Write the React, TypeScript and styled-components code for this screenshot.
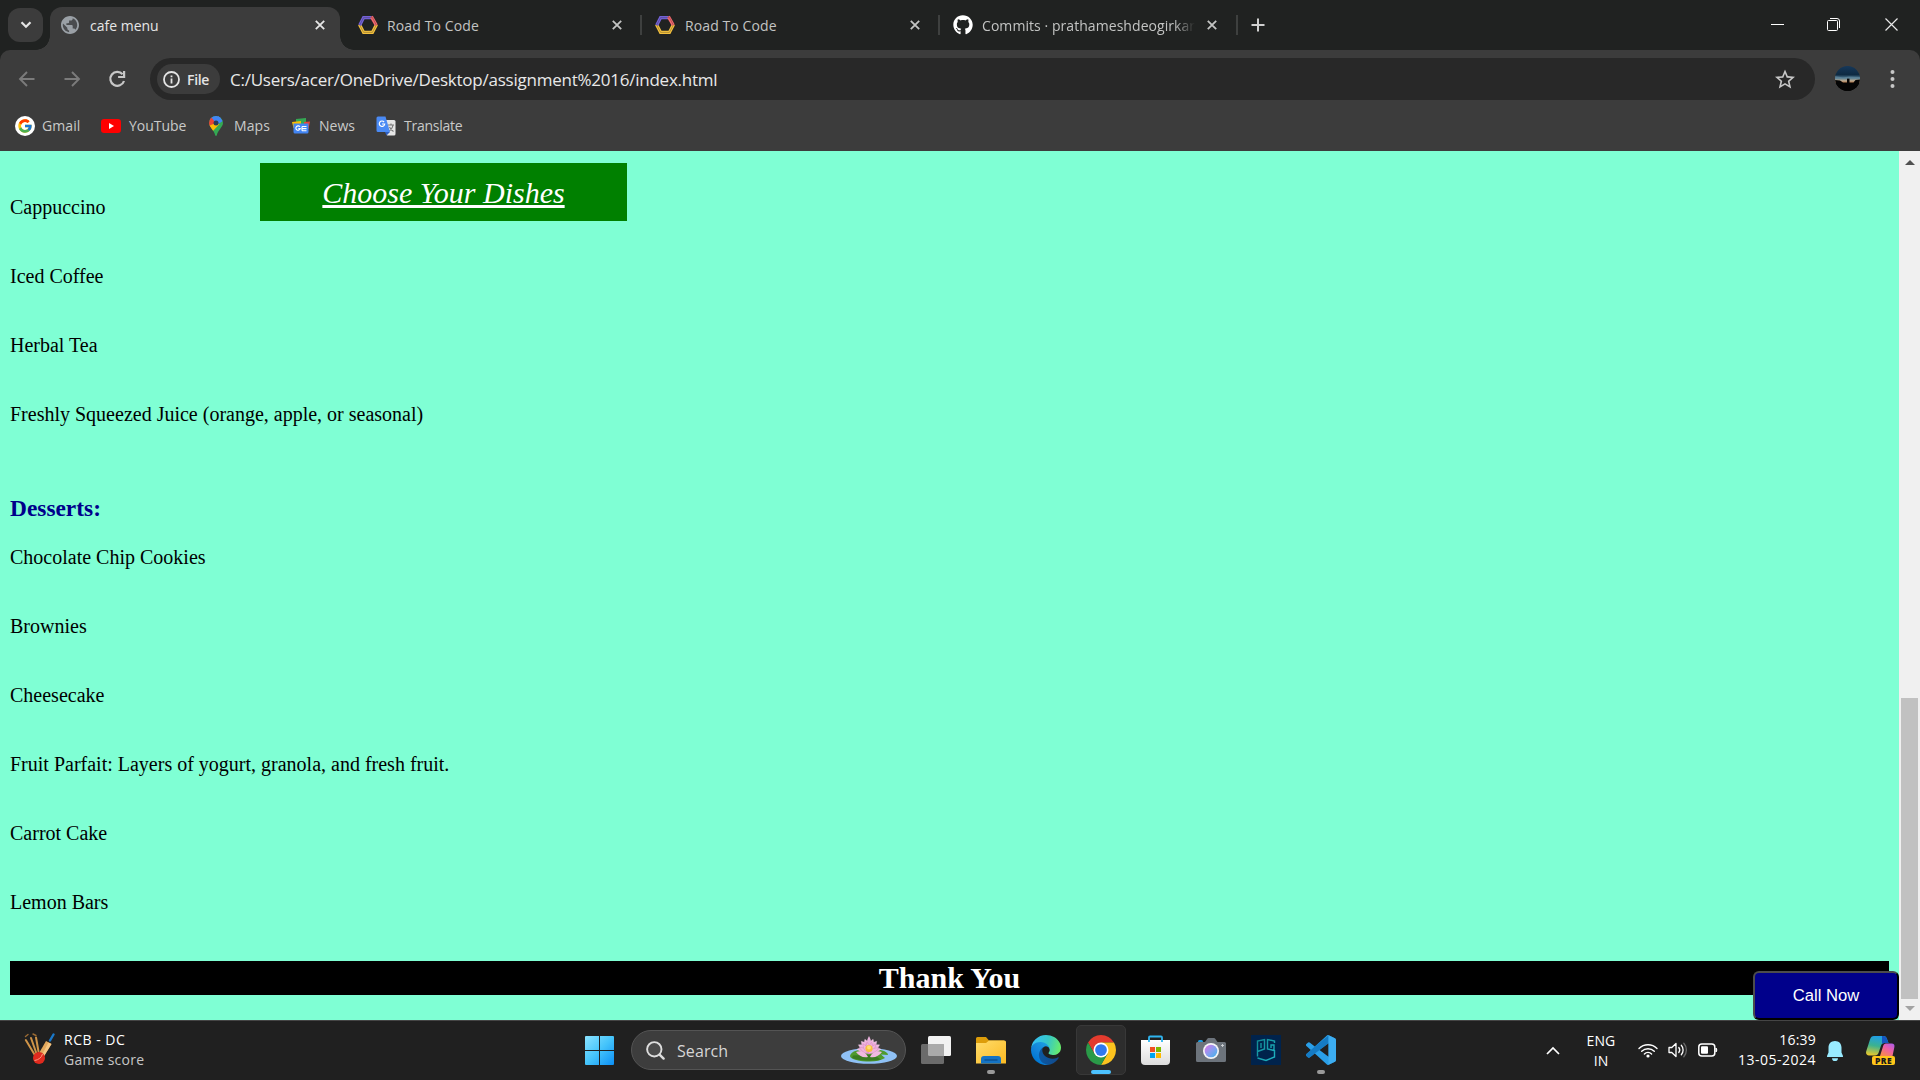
import React from "react";
import styled, { createGlobalStyle } from "styled-components";
import { FcGoogle } from "react-icons/fc";
import { FaGithub } from "react-icons/fa";

const UI_FONT = '"Open Sans", "Noto Sans", sans-serif';

const GlobalStyle = createGlobalStyle`
  html, body { margin: 0; padding: 0; background: #202221; overflow: hidden; }
  *, *::before, *::after { box-sizing: border-box; }
  svg { display: block; flex: none; }
`;

/* ---------- window ---------- */

const Screen = styled.div`
  width: 1920px;
  height: 1080px;
  display: grid;
  grid-template-rows: 50px 56px 45px 869px 60px;
  overflow: hidden;
  font-family: ${UI_FONT};
`;

/* ---------- tab strip ---------- */

const TabStrip = styled.header`
  display: flex;
  background: #202221;
  color: #c9cac9;
`;

const TabSearch = styled.button`
  width: 35px;
  height: 34px;
  margin: 8px 7px 0 8px;
  padding: 0;
  border: 0;
  border-radius: 12px;
  background: #3c3c3c;
  display: grid;
  place-items: center;
`;

const Tab = styled.div<{ $active?: boolean; $width: number; $left?: number; $right?: number }>`
  position: relative;
  width: ${(p) => p.$width}px;
  height: ${(p) => (p.$active ? 43 : 36)}px;
  margin-top: 7px;
  padding: 0 ${(p) => p.$right ?? 15}px ${(p) => (p.$active ? 7 : 0)}px ${(p) => p.$left ?? 11}px;
  display: flex;
  align-items: center;
  border-radius: 12px 12px 0 0;
  background: ${(p) => (p.$active ? "#3c3c3c" : "transparent")};
  color: ${(p) => (p.$active ? "#e6e6e6" : "#c3c4c3")};

  &::before,
  &::after {
    content: "";
    display: ${(p) => (p.$active ? "block" : "none")};
    position: absolute;
    bottom: 0;
    width: 14px;
    height: 14px;
  }
  &::before {
    left: -14px;
    background: radial-gradient(circle at 0 0, transparent 13.5px, #3c3c3c 14px);
  }
  &::after {
    right: -14px;
    background: radial-gradient(circle at 100% 0, transparent 13.5px, #3c3c3c 14px);
  }
`;

const TabTitle = styled.span<{ $ls?: number; $fade?: boolean; $gap?: number }>`
  flex: 1;
  min-width: 0;
  margin-left: ${(p) => p.$gap ?? 9}px;
  margin-right: 12px;
  padding-top: 1px;
  overflow: hidden;
  white-space: nowrap;
  font-size: 14px;
  line-height: 22px;
  letter-spacing: ${(p) => p.$ls ?? 0}px;
  mask-image: ${(p) => (p.$fade ? "linear-gradient(90deg, #000 90%, transparent 100%)" : "none")};
`;

const Divider = styled.i`
  width: 2px;
  height: 20px;
  margin-top: 15px;
  background: #3e403f;
`;

const NewTab = styled.button`
  width: 40px;
  height: 50px;
  padding: 0;
  border: 0;
  background: none;
  display: grid;
  place-items: center;
`;

const WindowButtons = styled.div`
  margin-left: auto;
  display: flex;
  gap: 43px;
  padding: 18px 22px 0 0;

  & > :last-child {
    margin-left: 2px;
  }
`;

/* ---------- toolbar ---------- */

const ToolbarBacking = styled.div`
  background: #202221;
`;

const Toolbar = styled.div`
  height: 56px;
  padding: 8px 0 0 16px;
  display: flex;
  background: #3c3c3c;
  border-radius: 10px 10px 0 0;
`;

const NavButton = styled.button`
  width: 24px;
  height: 42px;
  margin-right: 21px;
  padding: 0 2px 0 0;
  border: 0;
  background: none;
  display: grid;
  place-items: center;
`;

const AddressBar = styled.div`
  width: 1665px;
  height: 42px;
  margin-left: -1px;
  padding: 0 20px 0 7px;
  display: flex;
  align-items: center;
  border-radius: 21px;
  background: #282828;
`;

const FileChip = styled.div`
  width: 63px;
  height: 30px;
  padding-left: 6px;
  display: flex;
  align-items: center;
  gap: 7px;
  border-radius: 15px;
  background: #3c3c3c;
  color: #e4e4e4;
  font-size: 14px;
  font-weight: 600;
  letter-spacing: -0.3px;
`;

const Url = styled.span`
  flex: 1;
  margin-left: 10px;
  padding-top: 1px;
  color: #e8e8e8;
  font-size: 17px;
  line-height: 24px;
  letter-spacing: -0.24px;
  white-space: nowrap;
`;

const Avatar = styled.svg`
  margin: 8px 30px 0 20px;
`;

const BookmarkBar = styled.nav`
  display: flex;
  align-items: flex-start;
  background: #3c3c3c;
  color: #c9cac9;
  padding-left: 15px;
`;

const Bookmark = styled.a<{ $width: number; $gap: number }>`
  width: ${(p) => p.$width}px;
  height: 40px;
  display: flex;
  align-items: center;
  gap: ${(p) => p.$gap}px;
  white-space: nowrap;
`;

const BookmarkLabel = styled.span<{ $ls: number }>`
  padding-bottom: 2px;
  font-size: 14px;
  letter-spacing: ${(p) => p.$ls}px;
`;

const GoogleBadge = styled.span`
  width: 20px;
  height: 20px;
  border-radius: 50%;
  background: #fff;
  display: grid;
  place-items: center;
`;

/* ---------- page ---------- */

const Viewport = styled.main`
  position: relative;
  display: grid;
  grid-template-columns: 1899px 21px;
  background: #7fffd4;
  font-family: "Liberation Serif", "Times New Roman", serif;
`;

const MenuPage = styled.div`
  padding: 45px 10px 0;
  color: #000;
`;

const Dish = styled.p`
  margin: 0 0 46px;
  font-size: 20px;
  line-height: 23px;
`;

const SectionTitle = styled.h3`
  margin: 69px 0 24px;
  font-size: 23.4px;
  line-height: 27px;
  color: #00008b;
`;

const ThankYou = styled.h2`
  margin: 47px 0 0;
  height: 34px;
  background: #000;
  color: #fff;
  font-size: 30px;
  line-height: 34px;
  text-align: center;
`;

const ChooseBanner = styled.div`
  position: absolute;
  left: 260px;
  top: 12px;
  width: 367px;
  height: 58px;
  background: #008000;
  color: #fff;
  font-size: 30px;
  line-height: 60px;
  font-style: italic;
  text-align: center;
  text-decoration: underline;
  text-decoration-thickness: 3px;
`;

const CallNow = styled.button`
  position: absolute;
  right: 21px;
  bottom: 0;
  width: 146px;
  height: 49px;
  padding: 0;
  border: 2px solid;
  border-color: #4c4c4c #000 #000 #4c4c4c;
  border-radius: 6px;
  background: #00008b;
  color: #fff;
  font-family: "Liberation Sans", Arial, sans-serif;
  font-size: 16.67px;
`;

const Scrollbar = styled.div`
  display: flex;
  flex-direction: column;
  align-items: center;
  justify-content: space-between;
  padding: 9px 0;
  background: #f0f0f0;
`;

const Thumb = styled.div`
  width: 17px;
  height: 301px;
  margin: auto 0 7px;
  background: #c1c1c1;
`;

/* ---------- taskbar ---------- */

const Taskbar = styled.footer`
  display: grid;
  grid-template-columns: 585px 1fr auto;
  border-top: 1px solid #454545;
  background: #202020;
  color: #fff;
`;

const Widget = styled.div`
  display: flex;
  padding: 9px 0 0 24px;
  gap: 9px;
`;

const CricketBox = styled.span`
  padding-top: 3px;
`;

const TwoLines = styled.div<{ $align?: string; $width?: number }>`
  width: ${(p) => (p.$width ? p.$width + "px" : "auto")};
  text-align: ${(p) => p.$align ?? "left"};
  font-size: 14px;
  line-height: 20px;
  white-space: nowrap;
`;

const Line = styled.div<{ $ls?: number; $muted?: boolean }>`
  letter-spacing: ${(p) => p.$ls ?? 0}px;
  color: ${(p) => (p.$muted ? "#c6c6c6" : "#fff")};
`;

const Apps = styled.div`
  display: flex;
  align-items: flex-start;
`;

const StartButton = styled.div`
  padding-top: 15px;
  margin-right: 17px;
`;

const SearchBox = styled.div`
  width: 275px;
  height: 40px;
  margin-top: 9px;
  padding: 0 8px 0 14px;
  display: flex;
  align-items: center;
  border: 1px solid #545454;
  border-radius: 20px;
  background: #3d3d3d;
`;

const SearchLabel = styled.span`
  flex: 1;
  margin-left: 12px;
  padding-top: 1px;
  color: #d6d6d6;
  font-size: 16px;
  letter-spacing: 0.1px;
`;

const AppTile = styled.div<{ $active?: boolean }>`
  width: 50px;
  height: 50px;
  margin: 4px 0 0 5px;
  display: flex;
  flex-direction: column;
  align-items: center;
  padding-top: ${(p) => (p.$active ? 9 : 10)}px;
  border: ${(p) => (p.$active ? "1px solid #383838" : "0")};
  border-radius: 5px;
  background: ${(p) => (p.$active ? "#2d2d2d" : "transparent")};
`;

const Indicator = styled.i<{ $active?: boolean }>`
  width: ${(p) => (p.$active ? 20 : 8)}px;
  height: 4px;
  margin-top: 5px;
  border-radius: 2px;
  background: ${(p) => (p.$active ? "#4cc2ff" : "#999")};
`;

const Tray = styled.div`
  display: flex;
  align-items: flex-start;
  padding-right: 24px;
`;

const TrayIcon = styled.span<{ $top: number; $right: number }>`
  margin: ${(p) => p.$top}px ${(p) => p.$right}px 0 0;
`;

/* ---------- icons ---------- */

const CloseIcon = () => (
  <svg width="10" height="10" viewBox="0 0 10 10" stroke="currentColor" strokeWidth="1.8">
    <path d="M.8.8l8.4 8.4M9.2.8L.8 9.2" />
  </svg>
);

const Globe = () => (
  <svg width="18" height="18" viewBox="2 2 20 20">
    <circle cx="12" cy="12" r="9" fill="#4a4c4f" />
    <path fill="#9aa0a6" d="M12 2C6.480 2 2 6.480 2 12s4.480 10 10 10 10-4.480 10-10S17.520 2 12 2zm-1 17.930c-3.950-.490-7-3.850-7-7.930 0-.620.080-1.210.210-1.790L9 15v1c0 1.100.9 2 2 2v1.930zm6.900-2.540c-.260-.810-1-1.390-1.900-1.390h-1v-3c0-.550-.450-1-1-1H8v-2h2c.550 0 1-.450 1-1V7h2c1.100 0 2-.9 2-2v-.410c2.930 1.190 5 4.060 5 7.410 0 2.080-.8 3.970-2.100 5.390z" />
  </svg>
);

const HexLogo = () => (
  <svg width="20" height="20" viewBox="0 0 20 20" fill="none" strokeWidth="3.200" strokeLinejoin="miter">
    <path stroke="#f3c03c" d="M1.500 9.500L5.600 17.400h8.800L18.500 9.500" />
    <path stroke="#7462d8" d="M1.700 10.200L5.600 2.600h8" />
    <path stroke="#f4686e" d="M13.400 1.600l4.900 8.600" />
    <path stroke="#202221" strokeWidth=".6" strokeOpacity=".5" d="M1.700 10L5.600 2.600h8.800L18.300 10l-3.900 7.400H5.600z" />
  </svg>
);

const Arrow = ({ flip }: { flip?: boolean }) => (
  <svg width="18" height="18" viewBox="0 0 18 18" fill="none" stroke="#7b7b7b" strokeWidth="1.900">
    <path d={flip ? "M1.500 9h14M9 2l7 7-7 7" : "M16.500 9h-14M9 2L2 9l7 7"} />
  </svg>
);

const Reload = () => (
  <svg width="18" height="18" viewBox="0 0 18 18" fill="none" stroke="#c7c7c7" strokeWidth="2.200">
    <path d="M14.600 4.200A7 7 0 1 0 16 11" />
    <path d="M16.100 1v6h-6" />
  </svg>
);

const Info = () => (
  <svg width="17" height="17" viewBox="0 0 17 17" fill="none" stroke="#e4e4e4" strokeWidth="1.800">
    <circle cx="8.500" cy="8.500" r="7.500" />
    <path d="M8.500 7.500v5M8.500 4.400v1.900" />
  </svg>
);

const Star = () => (
  <svg width="20" height="20" viewBox="2 1.500 20 20">
    <path fill="#c7c7c7" d="M22 9.240l-7.190-.620L12 2 9.190 8.630 2 9.240l5.460 4.730L5.820 21 12 17.270 18.180 21l-1.630-7.030L22 9.240zM12 15.400l-3.760 2.270 1-4.280-3.320-2.880 4.380-.380L12 6.100l1.710 4.040 4.380.380-3.320 2.880 1 4.280L12 15.400z" />
  </svg>
);

const ProfilePhoto = () => (
  <Avatar width="25" height="25" viewBox="0 0 25 25">
    <defs>
      <linearGradient id="sky" x1="0" y1="0" x2="0" y2="1">
        <stop offset="0" stopColor="#16385a" />
        <stop offset=".35" stopColor="#0e2a42" />
        <stop offset=".48" stopColor="#4f7890" />
        <stop offset=".58" stopColor="#b3a690" />
        <stop offset=".68" stopColor="#c07a48" />
        <stop offset=".7" stopColor="#000" />
      </linearGradient>
      <clipPath id="face"><circle cx="12.500" cy="12.500" r="12.500" /></clipPath>
    </defs>
    <g clipPath="url(#face)">
      <rect width="25" height="25" fill="url(#sky)" />
      <path d="M0 14l5 .5 3 2h4v-4h2.500v4h4l2-2.500 5-.5V25H0z" fill="#050505" />
      <path d="M0 10l8 1.500 6-1 11 .5v1.500H0z" fill="#6f95a8" opacity=".45" />
    </g>
  </Avatar>
);

const YouTube = () => (
  <svg width="20" height="14" viewBox="0 0 20 14">
    <rect width="20" height="14" rx="3.200" fill="#f00" />
    <path d="M8 4l5 3-5 3z" fill="#fff" />
  </svg>
);

const MapsPin = () => (
  <svg width="14" height="20" viewBox="0 0 14 20">
    <defs>
      <clipPath id="pin"><path d="M7 0a7 7 0 0 1 7 7c0 4-4.800 6.500-6.200 12.200-.2.900-1.400.9-1.600 0C4.800 13.500 0 11 0 7a7 7 0 0 1 7-7z" /></clipPath>
    </defs>
    <g clipPath="url(#pin)">
      <rect width="14" height="20" fill="#34a853" />
      <path d="M0 0h14L7 8 0 3z" fill="#4285f4" />
      <path d="M0 2l2-1 5 6-4.500 6L0 9z" fill="#ea4335" />
      <path d="M-1 10L7 7l3.500 1L3 16z" fill="#fbbc04" />
      <path d="M9.500 0L14 5 9 8 5 5z" fill="#4285f4" />
      <circle cx="7" cy="7" r="2.500" fill="#2b3a55" />
    </g>
  </svg>
);

const News = () => (
  <svg width="18" height="18" viewBox="0 0 18 18">
    <path d="M4 2L14 1V8H4z" fill="#34a853" />
    <path d="M0 5l9-1V11H1.500z" fill="#fbbc04" />
    <path d="M12 5l6-.5L16.500 12H12z" fill="#ea4335" />
    <path d="M1.500 6.500h15V15a1.500 1.500 0 0 1-1.500 1.500H3A1.500 1.500 0 0 1 1.500 15z" fill="#4285f4" />
    <path d="M7.900 9.800a2.200 2.200 0 1 0 .3 1.800H6.300M10 9.500h4.500M10 11.600h4.500M10 13.700h4.500M10 9.500v4.200" stroke="#fff" strokeWidth="1.100" fill="none" />
  </svg>
);

const Translate = () => (
  <svg width="20" height="20" viewBox="0 0 20 20">
    <path d="M7 4h11a1.500 1.500 0 0 1 1.500 1.500V18a1.500 1.500 0 0 1-1.500 1.500h-7z" fill="#e6e6e6" />
    <path d="M12 9h6M15 7.500V9M17 9c-.5 3-2 5-4.500 6.500M13.500 11c.8 2 2.500 3.500 4 4.500" stroke="#777" strokeWidth="1.100" fill="none" />
    <path d="M2 .5h7.500L14 16H2A1.500 1.500 0 0 1 .5 14.500V2A1.500 1.500 0 0 1 2 .5z" fill="#4a8af4" />
    <path d="M9 16h5l-3.500 3.500z" fill="#2f5fc0" />
    <path d="M8.100 6a2.700 2.700 0 1 0 .6 2H6" stroke="#fff" strokeWidth="1.200" fill="none" />
  </svg>
);

const Cricket = () => (
  <svg width="31" height="32" viewBox="0 0 31 32">
    <g strokeLinecap="round">
      <path d="M1.800 7l9 15M7 5l6 17M12 4.500l2.500 14" stroke="#cf9448" strokeWidth="2" />
      <path d="M1.500 3.500l2.500-2M9 1l3 1.500" stroke="#9b6b34" strokeWidth="1.400" />
      <path d="M29.500 1.500l-3.500 6" stroke="#1a78c9" strokeWidth="2.400" />
    </g>
    <path d="M22 8l5.500 3L19.500 24l-5-3z" fill="#e3a85c" />
    <path d="M24.500 9.500l3 1.500L19.500 24l-2-1.200z" fill="#f4c582" />
    <circle cx="15" cy="25" r="6" fill="#e02a1e" />
    <path d="M10.500 27.500c4-.5 7-3 8-6.500" stroke="#ff9a80" strokeWidth="1" fill="none" />
  </svg>
);

const WindowsLogo = () => (
  <svg width="29" height="29" viewBox="0 0 29 29">
    <defs>
      <linearGradient id="win" x1="0" y1="0" x2="1" y2="1">
        <stop offset="0" stopColor="#8be3ff" />
        <stop offset=".5" stopColor="#45c4fb" />
        <stop offset="1" stopColor="#0c8ff5" />
      </linearGradient>
    </defs>
    <path d="M0 1a1 1 0 0 1 1-1h13v14H0zM15 0h13a1 1 0 0 1 1 1v13H15zM0 15h14v14H1a1 1 0 0 1-1-1zM15 15h14v13a1 1 0 0 1-1 1H15z" fill="url(#win)" />
  </svg>
);

const Magnifier = () => (
  <svg width="19" height="19" viewBox="0 0 19 19" fill="none" stroke="#dedede" strokeLinecap="round">
    <circle cx="8.300" cy="8.300" r="7.200" strokeWidth="1.900" fill="#4b4b4b" />
    <path d="M13.600 13.600l4 4" strokeWidth="2.400" />
  </svg>
);

const PETALS = [-84, -62, -40, -20, 20, 40, 62, 84];
const INNER_PETALS = [-60, -34, -10, 14, 38, 62];

const Lotus = () => (
  <svg width="56" height="28" viewBox="0 0 56 28">
    <defs>
      <linearGradient id="petal" x1="0" y1="0" x2="0" y2="1">
        <stop offset="0" stopColor="#f6c3e6" />
        <stop offset="1" stopColor="#cf6db5" />
      </linearGradient>
    </defs>
    <ellipse cx="28" cy="20" rx="28" ry="7.800" fill="#8fc1f5" />
    <path d="M9 20c1-5 9-7 19-7s19 2 19 6l-7-.5 4 3.500c-4 2.500-9 3.500-15 3.500-10 0-20-2-20-5.500z" fill="#4f9a2e" />
    <path d="M11 22c8 3 20 3.500 29 1.500l-8-5-20 1z" fill="#3a7c22" />
    {PETALS.map((a) => (
      <path key={a} d="M28 17c-3.800-4-3.800-9 0-14.500 3.800 5.500 3.800 10.500 0 14.500z" fill="url(#petal)" stroke="#fadcf2" strokeWidth=".3" transform={`rotate(${a} 28 14.500)`} />
    ))}
    <path d="M28 15c-3-5-3-10 0-15 3 5 3 10 0 15z" fill="#eab0dc" />
    {INNER_PETALS.map((a) => (
      <path key={a} d="M28 18c-2.500-3-2.500-8 0-12 2.500 4 2.500 9 0 12z" fill="#efb4dc" stroke="#d27fbd" strokeWidth=".4" transform={`rotate(${a} 28 17)`} />
    ))}
    <path d="M15 16c4-1.500 9-1 12 5-5 1-9-1-12-5zM41 16c-4-1.500-9-1-12 5 5 1 9-1 12-5z" fill="#f0b9e1" />
    <circle cx="28" cy="12.500" r="3.600" fill="#f7bf3c" />
    <circle cx="28" cy="11.500" r="2" fill="#ffe070" />
  </svg>
);

const TaskView = () => (
  <svg width="30" height="30" viewBox="0 0 30 30">
    <rect x="7" y="1" width="23" height="20" rx="1.500" fill="#f2f2f2" />
    <rect x="0" y="9" width="23" height="20" rx="1.500" fill="#6b6b6b" />
    <path d="M7 9h15a1 1 0 0 1 1 1v11H8.500A1.500 1.500 0 0 1 7 19.500z" fill="#aaa" />
  </svg>
);

const Folder = () => (
  <svg width="30" height="30" viewBox="0 0 30 30">
    <defs>
      <linearGradient id="fold" x1="0" y1="0" x2="1" y2="1">
        <stop offset="0" stopColor="#ffdc6b" />
        <stop offset="1" stopColor="#fbba22" />
      </linearGradient>
    </defs>
    <path d="M0 3.500A1.500 1.500 0 0 1 1.500 2H10l3 3.500h15V12H0z" fill="#dd9d0a" />
    <path d="M0 8h10l3-2.500h15.500A1.500 1.500 0 0 1 30 7v21.500H0z" fill="url(#fold)" />
    <path d="M5 28.500V24a3 3 0 0 1 3-3h14a3 3 0 0 1 3 3v4.500z" fill="#1473c4" />
    <path d="M8.500 25h13" stroke="#0b4f91" strokeWidth="1.400" />
  </svg>
);

const Edge = () => (
  <svg width="30" height="30" viewBox="4.600 4.900 256 256">
    <defs>
      <linearGradient id="e1" x1="63" y1="177" x2="241" y2="177" gradientUnits="userSpaceOnUse">
        <stop stopColor="#0c59a4" />
        <stop offset="1" stopColor="#114a8b" />
      </linearGradient>
      <linearGradient id="e2" x1="157" y1="100" x2="46" y2="221" gradientUnits="userSpaceOnUse">
        <stop stopColor="#1b9de2" />
        <stop offset=".6" stopColor="#1383d9" />
        <stop offset="1" stopColor="#0078d4" />
      </linearGradient>
      <linearGradient id="e3" x1="30" y1="60" x2="250" y2="120" gradientUnits="userSpaceOnUse">
        <stop stopColor="#35c1f1" />
        <stop offset=".5" stopColor="#36c7c7" />
        <stop offset="1" stopColor="#66eb6e" />
      </linearGradient>
    </defs>
    <path fill="url(#e1)" d="M235.680,195.460a93.730,93.730,0,0,1-10.540,4.710,101.870,101.870,0,0,1-35.900,6.460c-47.320,0-88.540-32.550-88.540-74.320A31.480,31.480,0,0,1,117.130,105c-42.800,1.800-53.800,46.400-53.800,72.530,0,73.880,68.090,81.370,82.760,81.370,7.910,0,19.840-2.300,27-4.560l1.310-.44A128.340,128.340,0,0,0,241,201.100a4,4,0,0,0-5.320-5.640Z" />
    <path fill="url(#e2)" d="M110.340,246.340A79.200,79.200,0,0,1,87.600,225a80.720,80.720,0,0,1,29.530-120c3.120-1.470,8.450-4.130,15.540-4a32.350,32.350,0,0,1,25.690,13,31.880,31.880,0,0,1,6.360,18.660c0-.21,24.460-79.600-80-79.600-43.900,0-80,41.660-80,78.210a130.150,130.150,0,0,0,12.110,56,128,128,0,0,0,156.380,67.110,75.550,75.550,0,0,1-62.780-8Z" />
    <path fill="url(#e3)" d="M156.940,153.780c-.81,1.050-3.300,2.500-3.300,5.660,0,2.610,1.700,5.120,4.720,7.230,14.380,10,41.490,8.680,41.560,8.680a59.560,59.560,0,0,0,30.270-8.350A61.380,61.380,0,0,0,260.620,114c.26-22.410-8-37.310-11.340-43.910C228.090,28.760,182.350,5,132.620,5a128,128,0,0,0-128,126.200c.48-36.540,36.800-66.050,80-66.050,3.500,0,23.460.34,42,10.070,16.340,8.580,24.900,18.940,30.850,29.210,6.180,10.670,7.280,24.150,7.280,29.520S162.080,147.160,156.940,153.780Z" />
  </svg>
);

const Chrome = () => (
  <svg width="30" height="30" viewBox="0 0 48 48">
    <path d="M24 12h20.780A24 24 0 0 0 3.220 12L13.610 30z" fill="#e33b2e" />
    <path d="M34.390 30L24 48A24 24 0 0 0 44.780 12H24z" fill="#fcc31e" />
    <path d="M13.610 30L3.220 12A24 24 0 0 0 24 48l10.390-18z" fill="#2a9a48" />
    <circle cx="24" cy="24" r="12" fill="#fff" />
    <circle cx="24" cy="24" r="9.400" fill="#3079ee" />
  </svg>
);

const Store = () => (
  <svg width="30" height="30" viewBox="0 0 30 30">
    <defs>
      <linearGradient id="bag" x1="0" y1="0" x2="0" y2="1">
        <stop offset="0" stopColor="#fff" />
        <stop offset="1" stopColor="#dcdcdc" />
      </linearGradient>
    </defs>
    <path d="M0 5h29v21a4 4 0 0 1-4 4H4a4 4 0 0 1-4-4z" fill="url(#bag)" />
    <path d="M8 7V2.500a1 1 0 0 1 1-1h11a1 1 0 0 1 1 1V7" stroke="#2fb5f0" strokeWidth="1.800" fill="none" />
    <path d="M9 12h5v5H9z" fill="#f25022" />
    <path d="M15 12h5v5h-5z" fill="#7fba00" />
    <path d="M9 18h5v5H9z" fill="#00a4ef" />
    <path d="M15 18h5v5h-5z" fill="#ffb900" />
  </svg>
);

const Camera = () => (
  <svg width="30" height="30" viewBox="0 0 30 30">
    <defs>
      <linearGradient id="lens" x1="0" y1="0" x2="1" y2="1">
        <stop offset="0" stopColor="#e272e8" />
        <stop offset=".5" stopColor="#8a9cf0" />
        <stop offset="1" stopColor="#3fb4e8" />
      </linearGradient>
    </defs>
    <rect x="2" y="5" width="5" height="4" rx="1.500" fill="#1a9be0" />
    <path d="M1.500 7H9l2.500-3.500a1 1 0 0 1 1-.5h5.500a1 1 0 0 1 1 .5L21.500 7h7A1.500 1.500 0 0 1 30 8.500v17a1.500 1.500 0 0 1-1.500 1.500h-27A1.500 1.500 0 0 1 0 25.500v-17A1.500 1.500 0 0 1 1.500 7z" fill="#6d747c" />
    <path d="M26.500 9v3M25 10.500h3" stroke="#cfd3d6" strokeWidth=".9" />
    <circle cx="15" cy="16" r="8" fill="#f4f4f6" />
    <circle cx="15" cy="16" r="6.300" fill="url(#lens)" />
  </svg>
);

const PredatorApp = () => (
  <svg width="30" height="30" viewBox="0 0 30 30" fill="none" strokeWidth="1.400">
    <rect width="30" height="30" fill="#00234c" />
    <defs>
      <linearGradient id="pg" x1="0" y1="0" x2="1" y2="1">
        <stop offset="0" stopColor="#108a94" />
        <stop offset="1" stopColor="#1fb4c4" />
      </linearGradient>
    </defs>
    <path stroke="url(#pg)" d="M6.500 21.500V6L13.500 4.500V14l-7 2.500M10 8v5M23.500 8V6L16.500 4.500V14l6.500 1.500V10H20v3M23.500 15v7L15 25.500 6.500 23" />
  </svg>
);

const VSCode = () => (
  <svg width="30" height="30" viewBox="0 0 24 24">
    <path fill="#2a9fe8" d="M23.150 2.587L18.210.21a1.494 1.494 0 0 0-1.705.29l-9.460 8.630-4.120-3.128a.999.999 0 0 0-1.276.057L.327 7.261A1 1 0 0 0 .326 8.740L3.899 12 .326 15.260a1 1 0 0 0 .001 1.479L1.650 17.940a.999.999 0 0 0 1.276.057l4.120-3.128 9.460 8.630a1.492 1.492 0 0 0 1.704.29l4.942-2.377A1.500 1.500 0 0 0 24 20.060V3.939a1.500 1.500 0 0 0-.85-1.352zm-5.146 14.861L10.826 12l7.178-5.448v10.896z" />
    <path fill="#0f6fb8" d="M18 .300L7.050 9.130l-3.150 2.870-3.570 3.260a1 1 0 0 0 0 1.479l1.320 1.200a1 1 0 0 0 1.276.057L18 6.550z" opacity=".75" />
    <path fill="#45b4f5" d="M18 .150l5.150 2.437A1.500 1.500 0 0 1 24 3.940v16.120a1.500 1.500 0 0 1-.85 1.352L18 23.850z" opacity=".7" />
  </svg>
);

const Wifi = () => (
  <svg width="20" height="15" viewBox="0 0 20 15" fill="none" stroke="#fff" strokeWidth="1.400" strokeLinecap="round">
    <path d="M1 5.500a12.800 12.800 0 0 1 18 0M3.700 8.300a9 9 0 0 1 12.600 0M6.400 11a5.200 5.200 0 0 1 7.200 0" />
    <circle cx="10" cy="13" r="1.600" fill="#fff" stroke="none" />
  </svg>
);

const Volume = () => (
  <svg width="20" height="16" viewBox="0 0 20 16" fill="none" stroke="#fff" strokeWidth="1.300" strokeLinecap="round" strokeLinejoin="round">
    <path d="M1 5.500h2.800L8 1.500v13l-4.200-4H1z" />
    <path d="M10.800 5.500a4 4 0 0 1 0 5M13.300 3.300a7 7 0 0 1 0 9.400" />
    <path d="M15.800 1.300a10 10 0 0 1 0 13.400" stroke="#6a6a6a" />
  </svg>
);

const Battery = () => (
  <svg width="20" height="14" viewBox="0 0 20 14">
    <rect x=".8" y="1" width="16" height="12" rx="3" fill="none" stroke="#fff" strokeWidth="1.500" />
    <rect x="3" y="3.200" width="7" height="7.600" rx="1" fill="#fff" />
    <path d="M18 5a3 3 0 0 1 0 4z" fill="#fff" stroke="#fff" />
  </svg>
);

const Bell = () => (
  <svg width="16" height="20" viewBox="0 0 16 20" fill="#99ebff">
    <path d="M8 0c4 0 6.500 2.800 6.500 6.500v5l1.500 3.500a.7.7 0 0 1-.7 1H.7A.7.7 0 0 1 0 15l1.500-3.500v-5C1.500 2.800 4 0 8 0zM5 17.200h6a3 3 0 0 1-6 0z" />
  </svg>
);

const PreTag = styled.span`
  position: absolute;
  left: 6px;
  bottom: 0;
  width: 23px;
  height: 9px;
  border-radius: 2px;
  background: #ffc61a;
  color: #1a1a1a;
  font-size: 8.5px;
  font-weight: 800;
  line-height: 9px;
  text-align: center;
  letter-spacing: 0.4px;
`;

const CopilotBox = styled.span`
  position: relative;
  width: 30px;
  height: 29px;
  margin: 15px 0 0 23px;
`;

const Copilot = () => (
  <CopilotBox>
    <svg width="29" height="29" viewBox="0 0 29 29">
      <defs>
        <linearGradient id="c1" x1=".5" y1="0" x2=".3" y2="1">
          <stop offset="0" stopColor="#1f9ee8" />
          <stop offset=".5" stopColor="#3bb28f" />
          <stop offset="1" stopColor="#e9c92c" />
        </linearGradient>
        <linearGradient id="c2" x1="1" y1="0" x2=".3" y2="1">
          <stop offset="0" stopColor="#a55cf0" />
          <stop offset=".5" stopColor="#ee5fa6" />
          <stop offset="1" stopColor="#f6894f" />
        </linearGradient>
      </defs>
      <path d="M8 0h9c2.500 0 3.500 1 4.200 3.500L22.500 7h-4c-2 0-3 1-3.700 3.300L12.500 17c-.6 1.600-1.600 2.500-3.500 2.500H3c-2.400 0-3.500-2-2.700-4.500L4 3.500C4.800 1 6 0 8 0z" fill="url(#c1)" />
      <path d="M16 0h1c2.500 0 3.500 1 4.200 3.500L22.500 7h-4c-1 0-1.800.3-2.500 1z" fill="#1456c0" />
      <path d="M20 7.500h5.500c2.400 0 3.500 1.500 2.800 4L26.500 20H14l3-9.500c.7-2.200 1.500-3 3-3z" fill="url(#c2)" />
    </svg>
    <PreTag>PRE</PreTag>
  </CopilotBox>
);

/* ---------- data ---------- */

const drinks = ["Cappuccino", "Iced Coffee", "Herbal Tea", "Freshly Squeezed Juice (orange, apple, or seasonal)"];
const desserts = ["Chocolate Chip Cookies", "Brownies", "Cheesecake", "Fruit Parfait: Layers of yogurt, granola, and fresh fruit.", "Carrot Cake", "Lemon Bars"];

const bookmarks = [
  { label: "Gmail", width: 86, gap: 7, ls: 0.1, icon: <GoogleBadge><FcGoogle size={16} /></GoogleBadge> },
  { label: "YouTube", width: 108, gap: 8, ls: -0.02, icon: <YouTube /> },
  { label: "Maps", width: 83, gap: 11, ls: 0.1, icon: <MapsPin /> },
  { label: "News", width: 84, gap: 9, ls: 0, icon: <News /> },
  { label: "Translate", width: 110, gap: 8, ls: -0.25, icon: <Translate /> },
];

const apps = [
  { name: "tasks", icon: <TaskView /> },
  { name: "files", icon: <Folder />, running: true },
  { name: "edge", icon: <Edge /> },
  { name: "chrome", icon: <Chrome />, running: true, active: true },
  { name: "store", icon: <Store /> },
  { name: "camera", icon: <Camera /> },
  { name: "predator", icon: <PredatorApp /> },
  { name: "code", icon: <VSCode />, running: true },
];

export default function App() {
  return (
    <>
      <GlobalStyle />
      <Screen>
        <TabStrip>
          <TabSearch>
            <svg width="12" height="8" viewBox="0 0 12 8" fill="none" stroke="#e4e4e4" strokeWidth="2.200">
              <path d="M1.500 1.200L6 5.800l4.500-4.600" />
            </svg>
          </TabSearch>
          <Tab $active $width={290}>
            <Globe />
            <TabTitle $gap={11}>cafe menu</TabTitle>
            <CloseIcon />
          </Tab>
          <Tab $width={300} $left={18} $right={18}>
            <HexLogo />
            <TabTitle $ls={0.12}>Road To Code</TabTitle>
            <CloseIcon />
          </Tab>
          <Divider />
          <Tab $width={296} $left={13} $right={18}>
            <HexLogo />
            <TabTitle $gap={10} $ls={0.1}>Road To Code</TabTitle>
            <CloseIcon />
          </Tab>
          <Divider />
          <Tab $width={296} $left={13} $right={19}>
            <FaGithub size={20} color="#fff" />
            <TabTitle $fade $ls={0.06}>Commits · prathameshdeogirkar</TabTitle>
            <CloseIcon />
          </Tab>
          <Divider />
          <NewTab>
            <svg width="14" height="14" viewBox="0 0 14 14" stroke="#d0d0d0" strokeWidth="2">
              <path d="M7 .5v13M.5 7h13" />
            </svg>
          </NewTab>
          <WindowButtons>
            <svg width="13" height="13" viewBox="0 0 13 13" stroke="#fff"><path d="M0 6.500h13" /></svg>
            <svg width="13" height="13" viewBox="0 0 13 13" fill="none" stroke="#fff">
              <path d="M3 .5h7a2.500 2.500 0 0 1 2.500 2.500v7" />
              <rect x=".5" y="2.500" width="10" height="10" rx="1" />
            </svg>
            <svg width="13" height="13" viewBox="0 0 13 13" stroke="#e8e8e8" strokeWidth="1.200"><path d="M.5.5l12 12M12.500.5l-12 12" /></svg>
          </WindowButtons>
        </TabStrip>

        <ToolbarBacking>
          <Toolbar>
            <NavButton><Arrow /></NavButton>
            <NavButton><Arrow flip /></NavButton>
            <NavButton><Reload /></NavButton>
            <AddressBar>
              <FileChip><Info />File</FileChip>
              <Url>C:/Users/acer/OneDrive/Desktop/assignment%2016/index.html</Url>
              <Star />
            </AddressBar>
            <ProfilePhoto />
            <svg width="5" height="42" viewBox="0 0 5 42" fill="#c7c7c7">
              <circle cx="2.500" cy="14" r="2" /><circle cx="2.500" cy="21" r="2" /><circle cx="2.500" cy="28" r="2" />
            </svg>
          </Toolbar>
        </ToolbarBacking>

        <BookmarkBar>
          {bookmarks.map((b) => (
            <Bookmark key={b.label} $width={b.width} $gap={b.gap}>
              {b.icon}
              <BookmarkLabel $ls={b.ls}>{b.label}</BookmarkLabel>
            </Bookmark>
          ))}
        </BookmarkBar>

        <Viewport>
          <MenuPage>
            {drinks.map((d) => <Dish key={d}>{d}</Dish>)}
            <SectionTitle>Desserts:</SectionTitle>
            {desserts.map((d) => <Dish key={d}>{d}</Dish>)}
            <ThankYou>Thank You</ThankYou>
          </MenuPage>
          <Scrollbar>
            <svg width="10" height="5" viewBox="0 0 10 5" fill="#505050"><path d="M5 0l5 5H0z" /></svg>
            <Thumb />
            <svg width="10" height="5" viewBox="0 0 10 5" fill="#a3a3a3"><path d="M0 0h10L5 5z" /></svg>
          </Scrollbar>
          <ChooseBanner>Choose Your Dishes</ChooseBanner>
          <CallNow>Call Now</CallNow>
        </Viewport>

        <Taskbar>
          <Widget>
            <CricketBox><Cricket /></CricketBox>
            <TwoLines>
              <Line $ls={0.5}>RCB - DC</Line>
              <Line $muted $ls={0.25}>Game score</Line>
            </TwoLines>
          </Widget>
          <Apps>
            <StartButton><WindowsLogo /></StartButton>
            <SearchBox>
              <Magnifier />
              <SearchLabel>Search</SearchLabel>
              <Lotus />
            </SearchBox>
            {apps.map((a) => (
              <AppTile key={a.name} $active={a.active}>
                {a.icon}
                {a.running && <Indicator $active={a.active} />}
              </AppTile>
            ))}
          </Apps>
          <Tray>
            <TrayIcon $top={25} $right={26}>
              <svg width="14" height="9" viewBox="0 0 14 9" fill="none" stroke="#fff" strokeWidth="1.700"><path d="M1 8l6-6 6 6" /></svg>
            </TrayIcon>
            <TrayIcon $top={10} $right={22}>
              <TwoLines $align="center" $width={30}>
                <Line $ls={0.1}>ENG</Line>
                <Line>IN</Line>
              </TwoLines>
            </TrayIcon>
            <TrayIcon $top={22} $right={10}><Wifi /></TrayIcon>
            <TrayIcon $top={21} $right={10}><Volume /></TrayIcon>
            <TrayIcon $top={22} $right={18}><Battery /></TrayIcon>
            <TrayIcon $top={9} $right={11}>
              <TwoLines $align="right" $width={80}>
                <Line $ls={0.2}>16:39</Line>
                <Line $ls={0.5}>13-05-2024</Line>
              </TwoLines>
            </TrayIcon>
            <TrayIcon $top={20} $right={0}><Bell /></TrayIcon>
            <Copilot />
          </Tray>
        </Taskbar>
      </Screen>
    </>
  );
}
